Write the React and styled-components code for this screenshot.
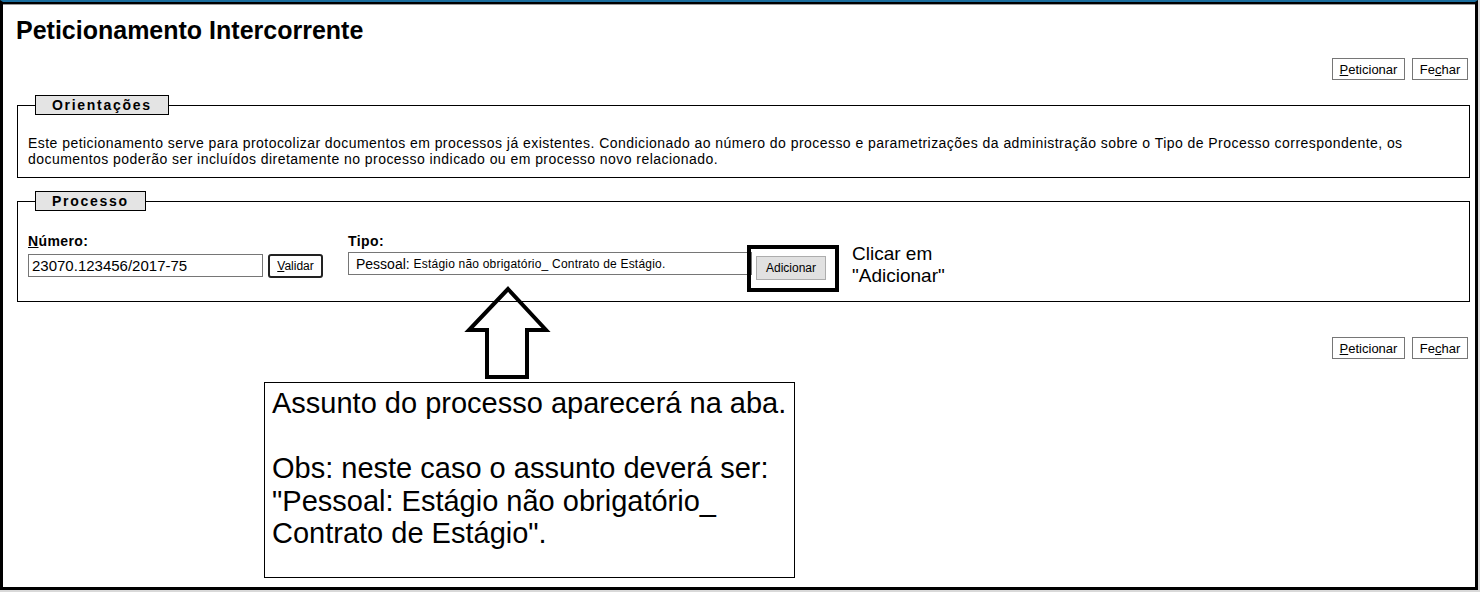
import React from "react";
import styled, { createGlobalStyle } from "styled-components";

const Global = createGlobalStyle`
  html, body { margin: 0; padding: 0; background: #fff; }
  body { font-family: "Liberation Sans", Arial, sans-serif; color: #000; }
  * { box-sizing: border-box; }
`;

const Screen = styled.div`
  position: relative;
  width: 1480px;
  height: 592px;
  background: #d9d9d9;
`;

const Frame = styled.div`
  width: 1478px;
  height: 590px;
  background: #fff;
  border-top: 2px solid #1b6e9e;
  box-shadow: inset 0 2px 0 #000, inset 0 3px 0 #9a9a9a;
  border-left: 3px solid #000;
  border-right: 3px solid #000;
  border-bottom: 3px solid #000;
  display: flex;
  flex-direction: column;
`;

const Title = styled.h1`
  margin: 0;
  padding: 15px 0 0 13px;
  font-size: 25px;
  line-height: 27px;
  font-weight: bold;
`;

const ActionBar = styled.div`
  display: flex;
  justify-content: flex-end;
  gap: 7px;
  padding-right: 7px;
  margin-top: ${(p) => p.$top}px;
`;

const PlainButton = styled.button`
  font-family: "Liberation Sans", Arial, sans-serif;
  font-size: 13px;
  height: 22px;
  padding: 0 6px;
  background: #fff;
  color: #000;
  border: 1px solid #767676;
  border-radius: 0;
  width: ${(p) => p.$w}px;
  u { text-decoration: underline; }
`;

const Fieldset = styled.fieldset`
  margin: ${(p) => p.$top}px 5px 0 14px;
  padding: 0 10px ${(p) => p.$bottom}px 10px;
  border: 1px solid #000;
  min-width: 0;
`;

const Legend = styled.legend`
  margin-left: 7px;
  padding: 0 ${(p) => p.$pad}px;
  height: 20px;
  line-height: 19px;
  background: #e4e4e4;
  border: 1px solid #000;
  font-size: 14px;
  font-weight: bold;
  letter-spacing: 1.7px;
`;

const Para = styled.p`
  margin: 0;
  padding-top: 20px;
  font-size: 14px;
  letter-spacing: 0.45px;
  line-height: 16px;
`;

const FormRow = styled.div`
  display: flex;
  gap: 25px;
  padding-top: 22px;
`;

const Field = styled.div`
  display: flex;
  flex-direction: column;
  gap: 3px;
`;

const Label = styled.label`
  font-size: 14px;
  letter-spacing: 0.4px;
  line-height: 16px;
  font-weight: bold;
  u { text-decoration: underline; }
`;

const Inline = styled.div`
  display: flex;
  align-items: center;
  gap: 5px;
`;

const TextBox = styled.div`
  width: ${(p) => p.$w}px;
  height: 23px;
  border: 1px solid #767676;
  padding: 0 0 0 ${(p) => p.$pl}px;
  display: flex;
  align-items: center;
  font-size: ${(p) => p.$fs}px;
  white-space: nowrap;
  overflow: hidden;
`;

const Small = styled.span`
  font-size: 12px;
  letter-spacing: 0.2px;
`;

const ValidarButton = styled.button`
  font-family: "Liberation Sans", Arial, sans-serif;
  font-size: 12px;
  width: 55px;
  height: 24px;
  padding: 0;
  background: #fff;
  color: #000;
  border: 2px solid #222;
  border-radius: 3px;
  margin-top: 2px;
`;

const GreyButton = styled.button`
  font-family: "Liberation Sans", Arial, sans-serif;
  font-size: 12px;
  width: 70px;
  height: 24px;
  padding: 0;
  background: #e1e1e1;
  color: #000;
  border: 1px solid #adadad;
  border-radius: 0;
  position: absolute;
  left: 756px;
  top: 256px;
`;

const Highlight = styled.div`
  position: absolute;
  left: 747px;
  top: 245px;
  width: 92px;
  height: 47px;
  border: 4px solid #000;
`;

const Callout = styled.div`
  position: absolute;
  left: 852px;
  top: 243px;
  font-size: 19px;
  line-height: 22px;
`;

const Arrow = styled.svg`
  position: absolute;
  left: 460px;
  top: 280px;
  overflow: visible;
`;

const Note = styled.div`
  position: absolute;
  left: 264px;
  top: 382px;
  width: 531px;
  height: 196px;
  border: 1px solid #000;
  background: #fff;
  padding: 4px 7px;
  font-size: 29px;
  line-height: 32.5px;
`;

export default function App() {
  return (
    <>
      <Global />
      <Screen>
        <Frame>
          <Title>Peticionamento Intercorrente</Title>
          <ActionBar $top={14}>
            <PlainButton $w={73}><u>P</u>eticionar</PlainButton>
            <PlainButton $w={56}>Fe<u>c</u>har</PlainButton>
          </ActionBar>
          <Fieldset $top={15} $bottom={10}>
            <Legend $pad={16}>Orientações</Legend>
            <Para>
              Este peticionamento serve para protocolizar documentos em processos já existentes. Condicionado ao número do processo e parametrizações da administração sobre o Tipo de Processo correspondente, os documentos poderão ser incluídos diretamente no processo indicado ou em processo novo relacionado.
            </Para>
          </Fieldset>
          <Fieldset $top={13} $bottom={23}>
            <Legend $pad={16}>Processo</Legend>
            <FormRow>
              <Field>
                <Label><u>N</u>úmero:</Label>
                <Inline>
                  <TextBox $w={235} $pl={3} $fs={15}>23070.123456/2017-75</TextBox>
                  <ValidarButton><u>V</u>alidar</ValidarButton>
                </Inline>
              </Field>
              <Field>
                <Label>Tipo:</Label>
                <TextBox $w={404} $pl={7} $fs={14}>
                  Pessoal:&nbsp;<Small>Estágio não obrigatório_ Contrato de Estágio.</Small>
                </TextBox>
              </Field>
            </FormRow>
          </Fieldset>
          <ActionBar $top={35}>
            <PlainButton $w={73}><u>P</u>eticionar</PlainButton>
            <PlainButton $w={56}>Fe<u>c</u>har</PlainButton>
          </ActionBar>
        </Frame>
        <GreyButton>Adicionar</GreyButton>
        <Highlight />
        <Callout>
          Clicar em
          <br />
          "Adicionar"
        </Callout>
        <Arrow width="95" height="100" viewBox="460 280 95 100">
          <polygon
            points="508,289 546,330 527,330 527,377 487,377 487,330 469,330"
            fill="none"
            stroke="#000"
            strokeWidth="4"
            strokeLinejoin="miter"
          />
        </Arrow>
        <Note>
          Assunto do processo aparecerá na aba.
          <br />
          <br />
          Obs: neste caso o assunto deverá ser:
          <br />
          "Pessoal: Estágio não obrigatório_
          <br />
          Contrato de Estágio".
        </Note>
      </Screen>
    </>
  );
}
